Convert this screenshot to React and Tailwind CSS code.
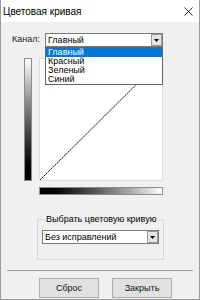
import React from 'react';

const font = { fontFamily: '"Liberation Sans", Arial, sans-serif' };

const Combo = ({ value, className }) => (
    <div className={`flex items-center bg-white border border-[#7a7a7a] h-[14px] ${className}`}>
        <span className="flex-1 pl-[2px] text-[9px] leading-none text-black truncate">{value}</span>
        <div className="w-[11px] h-[12px] bg-[#e5e5e5] border border-[#9a9a9a] flex items-center justify-center">
            <svg width="5" height="3" viewBox="0 0 5 3"><path d="M0 0h5L2.5 3z" fill="#000" /></svg>
        </div>
    </div>
);

const Button = ({ children }) => (
    <button className="w-[60px] h-[20px] bg-[#e1e1e1] border border-[#adadad] text-[9px] text-[#111] leading-none">
        {children}
    </button>
);

export default function App() {
    const channels = ['Главный', 'Красный', 'Зеленый', 'Синий'];

    return (
        <div className="w-[200px] h-[300px] bg-[#f0f0f0] border-x border-b border-[#9a9a9a] flex flex-col overflow-hidden" style={font}>
            {/* title bar */}
            <div className="h-[22px] bg-white flex items-center justify-between pl-[2px] pr-[6px] shrink-0">
                <span className="text-[10px] text-black">Цветовая кривая</span>
                <svg width="9" height="9" viewBox="0 0 9 9">
                    <path d="M0.5 0.5L8.5 8.5M8.5 0.5L0.5 8.5" stroke="#333" strokeWidth="1" />
                </svg>
            </div>

            {/* channel row */}
            <div className="relative flex items-center mt-[11px] pl-[11px]">
                <span className="w-[33px] text-[9px] text-[#222]">Канал:</span>
                <Combo value="Главный" className="w-[118px]" />
                <div className="absolute left-[44px] top-[14px] w-[118px] bg-white border border-[#646464] z-10">
                    {channels.map((c, i) => (
                        <div
                            key={c}
                            className={`h-[9px] pl-[2px] text-[9px] leading-[9px] ${i === 0 ? 'bg-[#0078d7] text-white' : 'text-black'}`}
                        >
                            {c}
                        </div>
                    ))}
                </div>
            </div>

            {/* curve area */}
            <div className="flex mt-[11px] pl-[23px] gap-[7px]">
                <div className="w-[8px] h-[123px] border border-[#8c8c8c] bg-gradient-to-b from-white to-black" />
                <div className="relative w-[124px] h-[123px] bg-white border border-[#dcdcdc]">
                    <svg className="absolute inset-0" width="122" height="121" viewBox="0 0 122 121">
                        <path d="M0 121L122 0" stroke="#111" strokeWidth="1" strokeDasharray="2 0.6" />
                    </svg>
                </div>
            </div>
            <div className="ml-[38px] mt-[6px] w-[124px] h-[8px] border border-[#8c8c8c] bg-gradient-to-r from-black to-white" />

            {/* group box */}
            <fieldset className="ml-[36px] mt-[20px] w-[127px] h-[45px] border border-[#d5d5d5] px-[4px] pt-0 pb-0 min-w-0">
                <legend className="ml-[3px] px-[1px] text-[9px] leading-none text-black">Выбрать цветовую кривую</legend>
                <Combo value="Без исправлений" className="w-[117px] mt-[6px]" />
            </fieldset>

            {/* separator */}
            <div className="mx-[6px] mt-[10px] h-0 border-t border-[#a0a0a0]" />

            {/* buttons */}
            <div className="flex gap-[13px] ml-[38px] mt-[7px]">
                <Button>Сброс</Button>
                <Button>Закрыть</Button>
            </div>
        </div>
    );
}
